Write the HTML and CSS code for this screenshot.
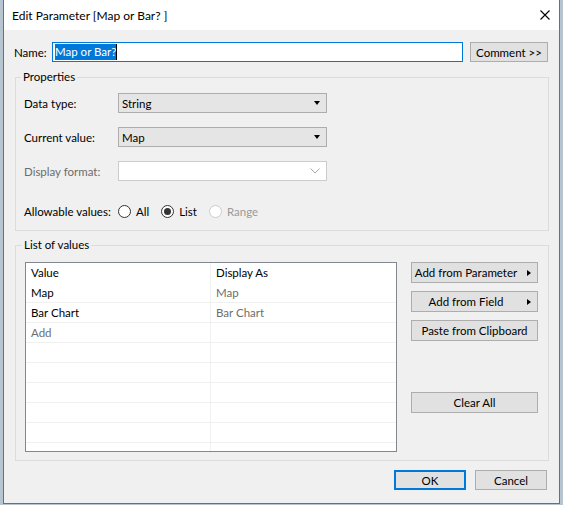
FILE: index.html
```html
<!DOCTYPE html>
<html lang="en">
<head>
    <meta charset="UTF-8">
    <meta name="viewport" content="width=device-width, initial-scale=1.0">
    <title>Edit Parameter</title>
    <link rel="stylesheet" href="styles.css">
</head>
<body>

    <div class="window">
        <!-- Title bar -->
        <div class="titlebar">
            <span class="title">Edit Parameter [Map or Bar? ]</span>
            <svg class="close" width="10" height="10" viewBox="0 0 10 10">
                <path d="M0.5 0.5 L9.5 9.5 M9.5 0.5 L0.5 9.5" stroke="#000" stroke-width="1.1" fill="none"/>
            </svg>
        </div>

        <div class="content">
            <!-- Name -->
            <div class="name-row">
                <span class="name-label">Name:</span>
                <div class="name-input"><span class="selected">Map or Bar?</span><span class="cursor"></span></div>
                <button class="btn comment">Comment &gt;&gt;</button>
            </div>

            <!-- Properties -->
            <fieldset class="group props">
                <legend>Properties</legend>
                <div class="field">
                    <span class="label">Data type:</span>
                    <div class="combo"><span>String</span><span class="caret"></span></div>
                </div>
                <div class="field">
                    <span class="label">Current value:</span>
                    <div class="combo"><span>Map</span><span class="caret"></span></div>
                </div>
                <div class="field">
                    <span class="label disabled">Display format:</span>
                    <div class="combo off">
                        <span></span>
                        <svg class="chevron" width="10" height="6" viewBox="0 0 10 6">
                            <path d="M0.5 0.5 L5 5 L9.5 0.5" stroke="#a8a8a8" stroke-width="1" fill="none"/>
                        </svg>
                    </div>
                </div>
                <div class="field radios">
                    <span class="label">Allowable values:</span>
                    <span class="option"><span class="radio"></span>All</span>
                    <span class="option"><span class="radio checked"></span>List</span>
                    <span class="option off"><span class="radio"></span>Range</span>
                </div>
            </fieldset>

            <!-- List of values -->
            <fieldset class="group values">
                <legend>List of values</legend>
                <div class="values-body">
                    <div class="grid">
                        <div class="grid-row head"><span>Value</span><span>Display As</span></div>
                        <div class="grid-row"><span>Map</span><span class="muted">Map</span></div>
                        <div class="grid-row"><span>Bar Chart</span><span class="muted">Bar Chart</span></div>
                        <div class="grid-row"><span class="muted">Add</span><span></span></div>
                        <div class="grid-row"><span></span><span></span></div>
                        <div class="grid-row"><span></span><span></span></div>
                        <div class="grid-row"><span></span><span></span></div>
                        <div class="grid-row"><span></span><span></span></div>
                        <div class="grid-row"><span></span><span></span></div>
                        <div class="grid-row"><span></span><span></span></div>
                    </div>
                    <div class="side">
                        <button class="btn menu"><span>Add from Parameter</span><i class="arrow"></i></button>
                        <button class="btn menu"><span>Add from Field</span><i class="arrow"></i></button>
                        <button class="btn">Paste from Clipboard</button>
                        <button class="btn clear">Clear All</button>
                    </div>
                </div>
            </fieldset>

            <!-- Footer -->
            <div class="footer">
                <button class="btn default">OK</button>
                <button class="btn">Cancel</button>
            </div>
        </div>
    </div>

</body>
</html>
```

FILE: styles.css
```css
html, body { margin: 0; height: 505px; }
body { background: #b7c5d0; font-family: "Segoe UI", Lato, sans-serif; font-size: 11.5px; color: #000; overflow: hidden; }

.window { box-sizing: border-box; width: 557px; height: 504px; margin-left: 3px; background: #f0f0f0; border: 1px solid #2b7fcf; border-top: 0; }

.titlebar { height: 30px; background: #fff; display: flex; align-items: center; padding: 0 9px 0 8px; font-size: 12px; }
.title { flex: 1; }
.close { display: block; }

.content { padding: 12px 10px 0 10px; }

.name-row { display: flex; align-items: center; height: 20px; }
.name-label { width: 38px; }
.name-input { box-sizing: border-box; width: 411px; height: 20px; border: 1px solid #0078d7; background: #fff; padding: 1px 2px; display: flex; }
.selected { background: #0078d7; color: #fff; line-height: 16px; }
.cursor { width: 1px; background: #000; }

.btn { box-sizing: border-box; font: inherit; color: #000; background: #e1e1e1; border: 1px solid #adadad; padding: 0; margin: 0; }
.comment { width: 78px; height: 20px; margin-left: 7px; }

.group { border: 1px solid #dcdcdc; margin: 0 0 0 1px; padding: 0 8px; }
.group legend { padding: 0 2px; margin-left: -3px; line-height: 16px; }
.props { margin-top: 7px; padding-bottom: 9px; }

.field { display: flex; align-items: center; height: 20px; margin-top: 8px; }
.field + .field { margin-top: 14px; }
.field.radios { margin-top: 20px; }
.label { width: 94px; }
.disabled { color: #6d6d6d; }

.combo { box-sizing: border-box; width: 209px; height: 20px; background: #e5e5e5; border: 1px solid #adadad; display: flex; align-items: center; justify-content: space-between; padding: 0 6px 0 3px; }
.caret { width: 0; height: 0; border-left: 3.5px solid transparent; border-right: 3.5px solid transparent; border-top: 4px solid #000; }
.combo.off { background: #fff; border-color: #cccccc; padding-right: 6px; }
.chevron { display: block; }

.option { display: flex; align-items: center; margin-right: 12px; }
.radio { box-sizing: border-box; width: 13px; height: 13px; border: 1px solid #333; border-radius: 50%; background: #fff; margin-right: 5px; display: flex; align-items: center; justify-content: center; }
.radio.checked::after { content: ""; width: 7px; height: 7px; border-radius: 50%; background: #333; }
.option.off { color: #9a9a9a; }
.option.off .radio { border-color: #cccccc; }

.values { margin-top: 6px; padding: 0 10px 8px 9px; }
.values-body { display: flex; margin-top: 9px; }

.grid { box-sizing: border-box; width: 372px; height: 190px; border: 1px solid #828790; background: #fff; overflow: hidden; }
.grid-row { display: flex; height: 20px; box-sizing: border-box; border-bottom: 1px solid #f0f0f0; line-height: 19px; }
.grid-row.head { border-bottom: 0; }
.grid-row span { padding-left: 5px; }
.grid-row span:first-child { width: 179px; border-right: 1px solid #f0f0f0; }
.muted { color: #6d6d6d; }

.side { display: flex; flex-direction: column; width: 127px; margin-left: 14px; }
.side .btn { height: 21px; margin-bottom: 8px; }
.menu { display: flex; align-items: center; }
.menu span { flex: 1; text-align: center; }
.arrow { width: 0; height: 0; border-top: 3.5px solid transparent; border-bottom: 3.5px solid transparent; border-left: 4px solid #000; margin: 0 6px 0 7px; }
.side .clear { margin-top: 43px; }

.footer { display: flex; justify-content: flex-end; padding-right: 2px; margin-top: 9px; }
.footer .btn { width: 72px; height: 20px; margin-left: 9px; }
.footer .default { border: 2px solid #0078d7; }
```
